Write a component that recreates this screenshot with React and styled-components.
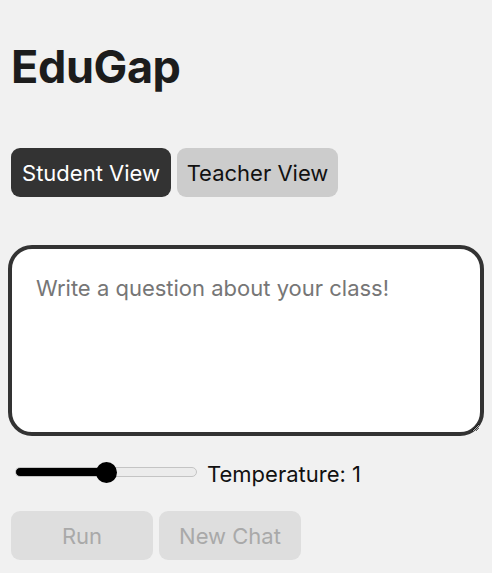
import React, { useState } from "react";
import styled, { createGlobalStyle } from "styled-components";

const GlobalStyle = createGlobalStyle`
  html, body {
    margin: 0;
    padding: 0;
    background: #f1f1f1;
    font-family: Inter, "Noto Sans", Arial, sans-serif;
    color: #1d1d1d;
  }
`;

const App = () => {
  const [view, setView] = useState("student");
  const [question, setQuestion] = useState("");
  const [temperature, setTemperature] = useState(1);

  const fill = (temperature / 2) * 100;

  return (
    <>
      <GlobalStyle />
      <StPage>
        <StTitle>EduGap</StTitle>

        <StTabs>
          <StTab active={view === "student"} onClick={() => setView("student")}>
            Student View
          </StTab>
          <StTab active={view === "teacher"} onClick={() => setView("teacher")}>
            Teacher View
          </StTab>
        </StTabs>

        <StTextarea
          value={question}
          onChange={(e) => setQuestion(e.target.value)}
          placeholder="Write a question about your class!"
        />

        <StSliderRow>
          <StRange
            type="range"
            min="0"
            max="2"
            step="0.1"
            value={temperature}
            onChange={(e) => setTemperature(Number(e.target.value))}
            style={{
              background: `linear-gradient(to right, #000 ${fill}%, #ececec ${fill}%)`,
            }}
          />
          <StLabel>Temperature: {temperature}</StLabel>
        </StSliderRow>

        <StActions>
          <StActionButton disabled={question === ""}>Run</StActionButton>
          <StActionButton disabled={question === ""}>New Chat</StActionButton>
        </StActions>
      </StPage>
    </>
  );
};

export default App;

const StPage = styled.div`
  padding: 40px 11px 20px;
  display: flex;
  flex-direction: column;
  align-items: flex-start;
`;

const StTitle = styled.h1`
  margin: 0 0 54px 0;
  font-size: 45px;
  line-height: 54px;
  font-weight: 700;
  letter-spacing: -0.4px;
  color: #1c1c1c;
`;

const StTabs = styled.div`
  display: flex;
  gap: 6px;
`;

const StTab = styled.button`
  height: 49px;
  width: ${(props) => (props.active ? "160px" : "161px")};
  padding: 0;
  border: none;
  border-radius: 9px;
  font-family: inherit;
  font-size: 22px;
  cursor: pointer;
  background: ${(props) => (props.active ? "#333333" : "#cccccc")};
  color: ${(props) => (props.active ? "#ffffff" : "#111111")};
`;

const StTextarea = styled.textarea`
  box-sizing: border-box;
  margin: 48px 0 0 -3px;
  width: 476px;
  height: 191px;
  border: 4px solid #333333;
  border-radius: 24px;
  padding: 26px 24px;
  font-family: inherit;
  font-size: 22px;
  color: #222;
  background: #ffffff;
  resize: vertical;
  &::placeholder {
    color: #767676;
  }
  &:focus {
    outline: none;
  }
`;

const StSliderRow = styled.div`
  display: flex;
  align-items: center;
  gap: 10px;
  margin-top: 22px;
  height: 28px;
`;

const StRange = styled.input`
  -webkit-appearance: none;
  appearance: none;
  margin: 0 0 0 4px;
  width: 182px;
  height: 10px;
  border-radius: 5px;
  border: 1px solid #c4c4c4;
  box-sizing: border-box;
  cursor: pointer;
  &::-webkit-slider-thumb {
    -webkit-appearance: none;
    width: 21px;
    height: 21px;
    border-radius: 50%;
    background: #000;
  }
  &:focus {
    outline: none;
  }
`;

const StLabel = styled.span`
  font-size: 22px;
  color: #111;
  margin-top: 3px;
`;

const StActions = styled.div`
  display: flex;
  gap: 6px;
  margin-top: 25px;
`;

const StActionButton = styled.button`
  width: 142px;
  height: 49px;
  padding: 0;
  border: none;
  border-radius: 9px;
  font-family: inherit;
  font-size: 22px;
  background: #dedede;
  color: ${(props) => (props.disabled ? "#a9a9a9" : "#111")};
  cursor: ${(props) => (props.disabled ? "default" : "pointer")};
`;
